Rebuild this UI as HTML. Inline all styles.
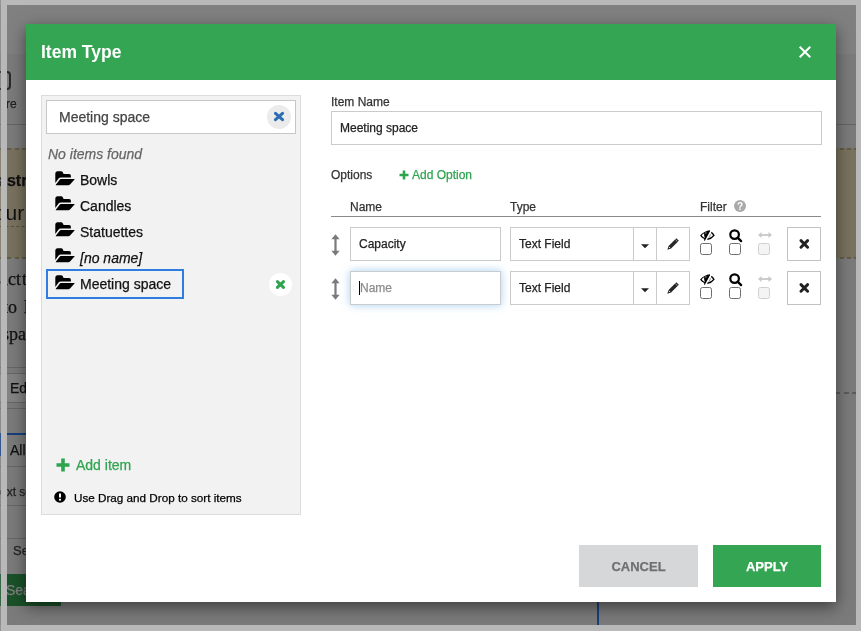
<!DOCTYPE html>
<html><head><meta charset="utf-8">
<style>
*{box-sizing:border-box;margin:0;padding:0}
html,body{width:861px;height:631px;overflow:hidden;background:#b9b9b9;font-family:"Liberation Sans",sans-serif}
.a{position:absolute}
#bg{position:absolute;left:0;top:5px;width:856px;height:620px;background:#7b7b7b;overflow:hidden}
#dlg{position:absolute;left:26px;top:24px;width:810px;height:578px;background:#fff;box-shadow:0 5px 15px rgba(0,0,0,.5)}
#hdr{position:absolute;left:26px;top:24px;width:810px;height:56px;background:#34a552}
.t{position:absolute;white-space:nowrap;line-height:1;will-change:transform;-webkit-text-stroke:0.25px currentColor}
.box{position:absolute;border:1px solid #cbcbcb;background:#fff}
.cb{position:absolute;width:12px;height:12px;border:1px solid #6f6f6f;border-radius:2.5px;background:#fff}
.f14{font-size:14px;color:#111}
.f12{font-size:12px;color:#222}
</style></head>
<body>
<div id="bg">
  <div class="a" style="left:0;top:0;width:856px;height:49px;background:#808080"></div>
  <div class="a" style="left:-40px;top:66px;width:51px;height:19px;border:2px solid #2a2a2a;border-radius:4px"></div>
  <div class="t" style="left:6.2px;top:92.5px;font-size:12px;color:#222">re</div>
  <div class="a" style="left:0;top:119px;width:856px;height:1px;background:#646464"></div>
  <div class="a" style="left:0;top:143px;width:856px;height:110px;background:#79725f"></div>
  <div class="a" style="left:0;top:143px;width:856px;height:1.5px;background:repeating-linear-gradient(90deg,#625c4b 0 4px,transparent 4px 7.3px)"></div>
  <div class="a" style="left:0;top:252px;width:856px;height:1.5px;background:repeating-linear-gradient(90deg,#625c4b 0 4px,transparent 4px 7.3px)"></div>
  <div class="a" style="left:0;top:221px;width:30px;height:0;border-top:1px dashed #55503f"></div>
  <div class="t" style="left:-2.3px;top:167.5px;font-size:16px;font-weight:700;color:#111">astri</div>
  <div class="t" style="left:-5.4px;top:197.2px;font-size:21px;color:#111;-webkit-text-stroke:0">cur</div>
  <div class="t" style="left:-0.3px;top:264.9px;font-size:18px;font-family:'Liberation Serif';color:#111">act</div>
  <div class="t" style="left:21.5px;top:264.9px;font-size:18px;font-family:'Liberation Serif';color:#111">t</div>
  <div class="t" style="left:3.2px;top:292.7px;font-size:18px;font-family:'Liberation Serif';color:#111">to</div>
  <div class="t" style="left:23.5px;top:292.7px;font-size:18px;font-family:'Liberation Serif';color:#111">l</div>
  <div class="t" style="left:1.5px;top:319.6px;font-size:18px;font-family:'Liberation Serif';color:#111">spa</div>
  <div class="a" style="left:0;top:362px;width:30px;height:1px;background:#666"></div>
  <div class="a" style="left:0;top:368px;width:30px;height:30px;background:#838383;border-top:1px solid #666;border-bottom:1px solid #666"></div>
  <div class="t" style="left:10.3px;top:376px;font-size:14px;color:#111">Ed</div>
  <div class="a" style="left:0;top:403px;width:30px;height:1px;background:#666"></div>
  <div class="a" style="left:-10px;top:428px;width:40px;height:2px;background:#17407f"></div>
  <div class="a" style="left:-10px;top:428px;width:11px;height:23px;background:#17407f"></div>
  <div class="t" style="left:10px;top:438px;font-size:14px;color:#111">All</div>
  <div class="a" style="left:0;top:461px;width:30px;height:1px;background:#666"></div>
  <div class="t" style="left:0.3px;top:481.2px;font-size:12px;color:#222">ext se</div>
  <div class="a" style="left:0;top:500px;width:30px;height:1px;background:#666"></div>
  <div class="a" style="left:0;top:533px;width:30px;height:1px;background:#666"></div>
  <div class="t" style="left:12.9px;top:539px;font-size:13px;color:#222">Se</div>
  <div class="a" style="left:-7px;top:569px;width:68px;height:32px;background:#1a5229"></div>
  <div class="t" style="left:6.3px;top:578px;font-size:14px;color:#808080">Search</div>
  <div class="a" style="left:836px;top:387px;width:20px;height:2px;background:repeating-linear-gradient(90deg,#5c5c5c 0 4.5px,transparent 4.5px 8.2px)"></div>
  <div class="a" style="left:597px;top:560px;width:2px;height:60px;background:#17407f"></div>
</div>
<div class="a" style="left:0;top:0;width:1px;height:5px;background:#959595"></div>
<div class="a" style="left:0;top:5px;width:1px;height:620px;background:rgba(255,255,255,.12)"></div>
<div class="a" style="left:0;top:625px;width:1px;height:6px;background:#959595"></div>
<div class="a" style="left:1px;top:0;width:6px;height:631px;background:#b9b9b9"></div>
<div id="dlg"></div>
<div id="hdr"></div>
<div class="t" style="left:41px;top:44px;font-size:17.5px;font-weight:700;color:#fff;-webkit-text-stroke:0">Item Type</div>
<svg class="a" style="left:799px;top:46px" width="12" height="12" viewBox="0 0 12 12"><path d="M0.7 0.7L11.3 11.3M11.3 0.7L0.7 11.3" stroke="#fff" stroke-width="2"/></svg>

<!-- left panel -->
<div class="a" style="left:41px;top:95px;width:260px;height:420px;background:#f2f2f2;border:1px solid #dcdcdc"></div>
<div class="box" style="left:46px;top:100px;width:250px;height:34px;border-color:#c6c6c6"></div>
<div class="t f14" style="left:59px;top:109.85px;color:#444">Meeting space</div>
<div class="a" style="left:267px;top:105px;width:24px;height:24px;border-radius:50%;background:#ebebeb"></div>
<svg class="a" style="left:273px;top:111px" width="12" height="11" viewBox="0 0 12 11"><path d="M2.5 2.4L9.5 8.6M9.5 2.4L2.5 8.6" stroke="#2b6db3" stroke-width="3.1" stroke-linecap="round"/></svg>
<div class="t" style="left:48px;top:146.75px;font-size:14px;font-style:italic;color:#666">No items found</div>

<svg width="0" height="0" style="position:absolute"><defs>
<g id="fold"><path d="M0.3 2.9Q0.3 0.3 2.7 0.3L6.2 0.3Q7.3 0.3 7.9 1.4L8.6 3L14.1 3Q15.9 3 15.9 4.8L15.9 6.6L5.8 6.6Q4.4 6.6 3.6 7.6L0.3 12Z" fill="#000"/><path d="M5.9 7.9L19.4 7.9Q19.8 8.1 19.5 8.5L15 13.6Q14.3 14.3 13.3 14.3L0.9 14.3Q0.6 14.1 0.8 13.8L4.5 8.9Q5.1 7.9 5.9 7.9Z" fill="#000"/></g>
</defs></svg>
<svg class="a" style="left:55px;top:170.5px" width="20" height="15"><use href="#fold"/></svg>
<div class="t f14" style="left:80px;top:172.95px">Bowls</div>
<svg class="a" style="left:55px;top:196.4px" width="20" height="15"><use href="#fold"/></svg>
<div class="t f14" style="left:80px;top:198.85px">Candles</div>
<svg class="a" style="left:55px;top:222.2px" width="20" height="15"><use href="#fold"/></svg>
<div class="t f14" style="left:80px;top:224.65px">Statuettes</div>
<svg class="a" style="left:55px;top:248.3px" width="20" height="15"><use href="#fold"/></svg>
<div class="t f14" style="left:80px;top:250.75px;font-style:italic">[no name]</div>
<div class="a" style="left:46px;top:269px;width:138px;height:30px;border:2px solid #2f7de1"></div>
<svg class="a" style="left:55px;top:274.5px" width="20" height="15"><use href="#fold"/></svg>
<div class="t f14" style="left:80px;top:276.95px">Meeting space</div>
<div class="a" style="left:268.6px;top:272.8px;width:23.4px;height:23.4px;border-radius:50%;background:#fff"></div>
<svg class="a" style="left:275px;top:279.3px" width="11" height="11" viewBox="0 0 11 11"><path d="M2.4 2.6L8.5 8.4M8.5 2.6L2.4 8.4" stroke="#2ea44f" stroke-width="3" stroke-linecap="round"/></svg>

<svg class="a" style="left:56.2px;top:457.6px" width="14" height="14" viewBox="0 0 14 14"><path d="M7 0.5V13.5M0.5 7H13.5" stroke="#2ea44f" stroke-width="3.6"/></svg>
<div class="t" style="left:75.5px;top:458.15px;font-size:14px;color:#2ea44f">Add item</div>
<svg class="a" style="left:54px;top:491px" width="12" height="12" viewBox="0 0 12 12"><circle cx="6" cy="6" r="5.8" fill="#000"/><path d="M6 2.6V6.6" stroke="#fff" stroke-width="2"/><rect x="5" y="7.8" width="2" height="1.8" fill="#fff"/></svg>
<div class="t" style="left:74px;top:491.8px;font-size:11.7px;color:#000">Use Drag and Drop to sort items</div>

<!-- right -->
<div class="t f12" style="left:331px;top:95.84px;color:#333">Item Name</div>
<div class="box" style="left:331px;top:111px;width:491px;height:34px"></div>
<div class="t f12" style="left:340px;top:121.74px">Meeting space</div>
<div class="t f12" style="left:331px;top:168.94px;color:#333">Options</div>
<svg class="a" style="left:398.5px;top:169.5px" width="10" height="10" viewBox="0 0 10 10"><path d="M5 0.5V9.5M0.5 5H9.5" stroke="#2ea44f" stroke-width="2.6"/></svg>
<div class="t f12" style="left:412.4px;top:168.94px;color:#2ea44f">Add Option</div>
<div class="t f12" style="left:350px;top:200.94px;color:#333">Name</div>
<div class="t f12" style="left:510px;top:200.94px;color:#333">Type</div>
<div class="t f12" style="left:700px;top:200.54px;color:#333">Filter</div>
<svg class="a" style="left:734px;top:200px" width="12" height="12" viewBox="0 0 12 12"><circle cx="6" cy="6" r="6" fill="#aaa"/><text x="6" y="10" text-anchor="middle" font-family="Liberation Sans" font-weight="700" font-size="10" fill="#fff">?</text></svg>
<div class="a" style="left:331px;top:216px;width:490px;height:1px;background:#8a8a8a"></div>

<!-- rows -->
<div id="r1" class="a" style="left:0;top:227px;width:861px;height:34px">
  <svg class="a" style="left:331px;top:6.5px" width="9" height="22" viewBox="0 0 9 22"><path d="M4.5 0.3L8.6 5.2H0.4Z M4.5 21.7L8.6 16.8H0.4Z" fill="#7a7a7a"/><rect x="3.4" y="4" width="2.2" height="14" fill="#7a7a7a"/></svg>
  <div class="box" style="left:350px;top:0;width:151px;height:34px"></div>
  <div class="t f12" style="left:359.3px;top:10.74px">Capacity</div>
  <div class="box" style="left:510px;top:0;width:180px;height:34px"></div>
  <div class="a" style="left:633px;top:0;width:1px;height:34px;background:#cbcbcb"></div>
  <div class="a" style="left:656px;top:0;width:1px;height:34px;background:#cbcbcb"></div>
  <div class="t f12" style="left:519px;top:10.54px">Text Field</div>
  <svg class="a" style="left:641px;top:16.8px" width="8" height="5" viewBox="0 0 8 5"><path d="M0 0.3H8L4 4.3Z" fill="#222"/></svg>
  <svg class="a" style="left:667px;top:10.8px" width="12" height="12" viewBox="0 0 12 12"><path d="M9.3 0.2L11.8 2.7L4.1 10.4L0.3 11.7L1.6 7.9Z" fill="#262626"/><path d="M8.3 1.5L10.5 3.7" stroke="#fff" stroke-width="0.55"/><circle cx="2.5" cy="9.5" r="0.6" fill="#fff"/></svg>
  <svg class="a" style="left:700px;top:3px" width="15" height="11" viewBox="0 0 15 11"><path fill-rule="evenodd" d="M10.1 0.2C6.2 0.7 2.6 2.5 0.1 5.4C1.2 7 2.8 8.3 4.6 9.1L4.3 10.9ZM1.7 5.4C2.5 4.3 3.3 3.7 4.3 3.2C3.9 4.6 4.1 6.5 5 8C3.6 7.4 2.5 6.5 1.7 5.4Z" fill="#000"/><path d="M11.3 2.4Q12.9 3.6 13.9 5.4Q11.6 8.6 7.3 9.4" stroke="#000" stroke-width="1.35" fill="none"/><path d="M10.4 4.2Q10.2 6.3 8.8 7.7" stroke="#555" stroke-width="0.7" fill="none"/><path d="M9.6 0.8L4.4 10.6" stroke="#000" stroke-width="1.1"/><circle cx="5.9" cy="2.9" r="0.55" fill="#fff"/></svg>
  <div class="cb" style="left:700px;top:16px"></div>
  <svg class="a" style="left:729px;top:2px" width="14" height="14" viewBox="0 0 14 14"><circle cx="5.6" cy="5.6" r="4.3" stroke="#000" stroke-width="2.2" fill="none"/><path d="M8.6 8.6L12.1 12.1" stroke="#000" stroke-width="2.3" stroke-linecap="round"/></svg>
  <div class="cb" style="left:729px;top:16px"></div>
  <svg class="a" style="left:758px;top:5px" width="14" height="6" viewBox="0 0 14 6"><path d="M0 3L3.5 0V6Z M14 3L10.5 0V6Z" fill="#c8c8c8"/><rect x="3" y="2.1" width="8" height="1.8" fill="#c8c8c8"/></svg>
  <div class="cb" style="left:758px;top:16px;border-color:#cfcfcf;background:#f4f4f4"></div>
  <div class="box" style="left:787px;top:0;width:34px;height:34px;border-color:#c2c2c2"></div>
  <svg class="a" style="left:798.5px;top:12.3px" width="11" height="10" viewBox="0 0 11 10"><path d="M2 1.6L8.6 8.2M8.6 1.6L2 8.2" stroke="#222" stroke-width="2.9" stroke-linecap="round"/></svg>
</div>
<div id="r2" class="a" style="left:0;top:271px;width:861px;height:34px">
  <svg class="a" style="left:331px;top:6.5px" width="9" height="22" viewBox="0 0 9 22"><path d="M4.5 0.3L8.6 5.2H0.4Z M4.5 21.7L8.6 16.8H0.4Z" fill="#7a7a7a"/><rect x="3.4" y="4" width="2.2" height="14" fill="#7a7a7a"/></svg>
  <div class="box" style="left:350px;top:0;width:151px;height:34px;box-shadow:0 0 8px rgba(102,175,233,.6)"></div>
  <div class="a" style="left:359px;top:10px;width:1px;height:14px;background:#000"></div>
  <div class="t f12" style="left:360px;top:10.74px;color:#8c8c8c">Name</div>
  <div class="box" style="left:510px;top:0;width:180px;height:34px"></div>
  <div class="a" style="left:633px;top:0;width:1px;height:34px;background:#cbcbcb"></div>
  <div class="a" style="left:656px;top:0;width:1px;height:34px;background:#cbcbcb"></div>
  <div class="t f12" style="left:519px;top:10.54px">Text Field</div>
  <svg class="a" style="left:641px;top:16.8px" width="8" height="5" viewBox="0 0 8 5"><path d="M0 0.3H8L4 4.3Z" fill="#222"/></svg>
  <svg class="a" style="left:667px;top:10.8px" width="12" height="12" viewBox="0 0 12 12"><path d="M9.3 0.2L11.8 2.7L4.1 10.4L0.3 11.7L1.6 7.9Z" fill="#262626"/><path d="M8.3 1.5L10.5 3.7" stroke="#fff" stroke-width="0.55"/><circle cx="2.5" cy="9.5" r="0.6" fill="#fff"/></svg>
  <svg class="a" style="left:700px;top:3px" width="15" height="11" viewBox="0 0 15 11"><path fill-rule="evenodd" d="M10.1 0.2C6.2 0.7 2.6 2.5 0.1 5.4C1.2 7 2.8 8.3 4.6 9.1L4.3 10.9ZM1.7 5.4C2.5 4.3 3.3 3.7 4.3 3.2C3.9 4.6 4.1 6.5 5 8C3.6 7.4 2.5 6.5 1.7 5.4Z" fill="#000"/><path d="M11.3 2.4Q12.9 3.6 13.9 5.4Q11.6 8.6 7.3 9.4" stroke="#000" stroke-width="1.35" fill="none"/><path d="M10.4 4.2Q10.2 6.3 8.8 7.7" stroke="#555" stroke-width="0.7" fill="none"/><path d="M9.6 0.8L4.4 10.6" stroke="#000" stroke-width="1.1"/><circle cx="5.9" cy="2.9" r="0.55" fill="#fff"/></svg>
  <div class="cb" style="left:700px;top:16px"></div>
  <svg class="a" style="left:729px;top:2px" width="14" height="14" viewBox="0 0 14 14"><circle cx="5.6" cy="5.6" r="4.3" stroke="#000" stroke-width="2.2" fill="none"/><path d="M8.6 8.6L12.1 12.1" stroke="#000" stroke-width="2.3" stroke-linecap="round"/></svg>
  <div class="cb" style="left:729px;top:16px"></div>
  <svg class="a" style="left:758px;top:5px" width="14" height="6" viewBox="0 0 14 6"><path d="M0 3L3.5 0V6Z M14 3L10.5 0V6Z" fill="#c8c8c8"/><rect x="3" y="2.1" width="8" height="1.8" fill="#c8c8c8"/></svg>
  <div class="cb" style="left:758px;top:16px;border-color:#cfcfcf;background:#f4f4f4"></div>
  <div class="box" style="left:787px;top:0;width:34px;height:34px;border-color:#c2c2c2"></div>
  <svg class="a" style="left:798.5px;top:12.3px" width="11" height="10" viewBox="0 0 11 10"><path d="M2 1.6L8.6 8.2M8.6 1.6L2 8.2" stroke="#222" stroke-width="2.9" stroke-linecap="round"/></svg>
</div>

<!-- buttons -->
<div class="a" style="left:579px;top:545px;width:119px;height:42px;background:#d6d7d9"></div>
<div class="t" style="left:579px;top:559.9px;width:119px;text-align:center;font-size:13px;font-weight:700;color:#707070">CANCEL</div>
<div class="a" style="left:713px;top:545px;width:108px;height:42px;background:#34a552"></div>
<div class="t" style="left:713px;top:559.9px;width:108px;text-align:center;font-size:13px;font-weight:700;color:#fff">APPLY</div>
</body></html>
